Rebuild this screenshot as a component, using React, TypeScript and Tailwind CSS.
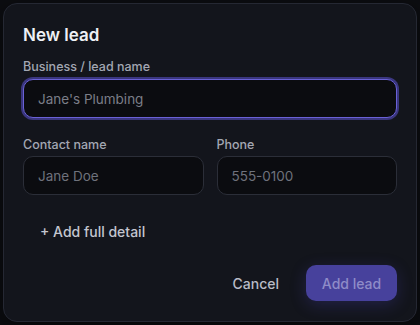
import React from 'react';

export default function App() {
    return (
        <div className="min-h-[325px] w-[420px] bg-[#0c0d11] p-[3px]" style={{ fontFamily: 'Inter, "Noto Sans", sans-serif' }}>
            <div className="h-[319px] rounded-[14px] border border-[#252833] bg-[#13151c] px-[19px] pt-[20px] shadow-[0_10px_30px_rgba(0,0,0,0.5)]">
                <h2 className="text-[17px] font-semibold leading-[22px] text-[#eef0f5]">New lead</h2>

                {/* Business */}
                <div className="mt-[13px]">
                    <label className="block text-[12.5px] font-medium leading-[16px] text-[#a3a7b3]">
                        Business / lead name
                    </label>
                    <input
                        type="text"
                        placeholder="Jane's Plumbing"
                        className="mt-[4px] h-[39px] w-full rounded-[10px] border border-[#6a61d6] bg-[#0b0c10] px-[14px] text-[13.5px] text-[#e5e7eb] outline-none ring-[2px] ring-[#4b44a8]/70 placeholder:text-[#7b7e88]"
                    />
                </div>

                {/* Contacto / Teléfono */}
                <div className="mt-[19px] grid grid-cols-2 gap-[13px]">
                    <div>
                        <label className="block text-[12.5px] font-medium leading-[16px] text-[#a3a7b3]">Contact name</label>
                        <input
                            type="text"
                            placeholder="Jane Doe"
                            className="mt-[3px] h-[39px] w-full rounded-[10px] border border-[#2b2e38] bg-[#0b0c10] px-[14px] text-[13.5px] text-[#e5e7eb] outline-none placeholder:text-[#6f727c]"
                        />
                    </div>
                    <div>
                        <label className="block text-[12.5px] font-medium leading-[16px] text-[#a3a7b3]">Phone</label>
                        <input
                            type="tel"
                            placeholder="555-0100"
                            className="mt-[3px] h-[39px] w-full rounded-[10px] border border-[#2b2e38] bg-[#0b0c10] px-[14px] text-[13.5px] text-[#e5e7eb] outline-none placeholder:text-[#6f727c]"
                        />
                    </div>
                </div>

                <button type="button" className="mt-[25px] px-[17px] text-[14px] font-medium leading-[24px] text-[#c3c6d0]">
                    + Add full detail
                </button>

                {/* Botones */}
                <div className="mt-[21px] flex items-center justify-end gap-[11px]">
                    <button type="button" className="h-[36px] px-[16px] text-[14px] font-medium text-[#b9bcc7]">
                        Cancel
                    </button>
                    <button
                        type="submit"
                        className="h-[36px] w-[91px] rounded-[10px] bg-[#47419c] text-[14px] font-medium text-[#8f8cc8] shadow-[0_4px_16px_rgba(80,70,200,0.25)]"
                    >
                        Add lead
                    </button>
                </div>
            </div>
        </div>
    );
}
